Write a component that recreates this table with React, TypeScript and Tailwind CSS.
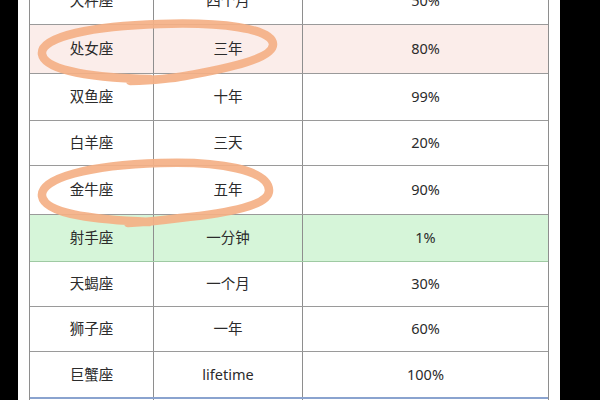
import React from 'react';

type Row = {
  sign: string;
  time: string;
  pct: string;
  h: string;
  bg?: string;
  line?: string;
};

const ROWS: Row[] = [
  { sign: '天秤座', time: '四个月', pct: '50%', h: 'h-[48px]' },
  { sign: '处女座', time: '三年', pct: '80%', h: 'h-[49px]', bg: 'bg-[#fbedea]' },
  { sign: '双鱼座', time: '十年', pct: '99%', h: 'h-[47px]' },
  { sign: '白羊座', time: '三天', pct: '20%', h: 'h-[45px]' },
  { sign: '金牛座', time: '五年', pct: '90%', h: 'h-[49px]' },
  { sign: '射手座', time: '一分钟', pct: '1%', h: 'h-[47px]', bg: 'bg-[#d6f5d9]', line: 'border-[#9fcaa3]' },
  { sign: '天蝎座', time: '一个月', pct: '30%', h: 'h-[45px]' },
  { sign: '狮子座', time: '一年', pct: '60%', h: 'h-[45px]' },
  { sign: '巨蟹座', time: 'lifetime', pct: '100%', h: 'h-[46px]', line: 'border-[#8aa3cf]' },
];

export default function App() {
  return (
    <div
      className="relative w-[600px] h-[400px] bg-black flex overflow-hidden text-[#2b2b2b]"
      style={{ fontFamily: '"Noto Sans", "Noto Sans CJK SC", sans-serif' }}
    >
      <div className="w-[18px] shrink-0" />
      <div className="w-[542px] shrink-0 bg-white pl-[11px] pr-[11px]">
        {/* top row is cut off by the screenshot edge */}
        <div className="-mt-[23px] border-l border-r border-[#8e8e8e] text-[14.5px]">
          {ROWS.map((r) => (
            <div
              key={r.sign}
              className={`flex border-b ${r.line ?? 'border-[#9a9a9a]'} ${r.h} ${r.bg ?? 'bg-white'}`}
            >
              <div className="w-[124px] flex items-center justify-center border-r border-[#8e8e8e]">{r.sign}</div>
              <div className="w-[149px] flex items-center justify-center border-r border-[#8e8e8e]">{r.time}</div>
              <div className="flex-1 flex items-center justify-center">{r.pct}</div>
            </div>
          ))}
          <div className="h-[10px] flex border-t border-[#8aa3cf]">
            <div className="w-[124px] border-r border-[#8e8e8e]" />
            <div className="w-[149px] border-r border-[#8e8e8e]" />
          </div>
        </div>
      </div>

      {/* hand-drawn circles over the rows */}
      <svg className="absolute inset-0 pointer-events-none" width="600" height="400" viewBox="0 0 600 400">
        <g fill="none" stroke="#f4b085" strokeOpacity="0.92" strokeWidth="8.5" strokeLinecap="round" strokeLinejoin="round">
          <path d="M 150 79 C 100 78, 45 72, 42 54 C 40 36, 95 26, 160 24 C 220 22, 272 28, 273 44 C 274 58, 230 68, 185 76 C 170 79, 155 80, 130 81" />
          <path d="M 150 222 C 100 220, 45 215, 42 196 C 40 178, 90 165, 160 163 C 220 161, 268 170, 269 190 C 270 205, 230 213, 180 218 C 165 220, 150 222, 128 223" />
        </g>
      </svg>
    </div>
  );
}
